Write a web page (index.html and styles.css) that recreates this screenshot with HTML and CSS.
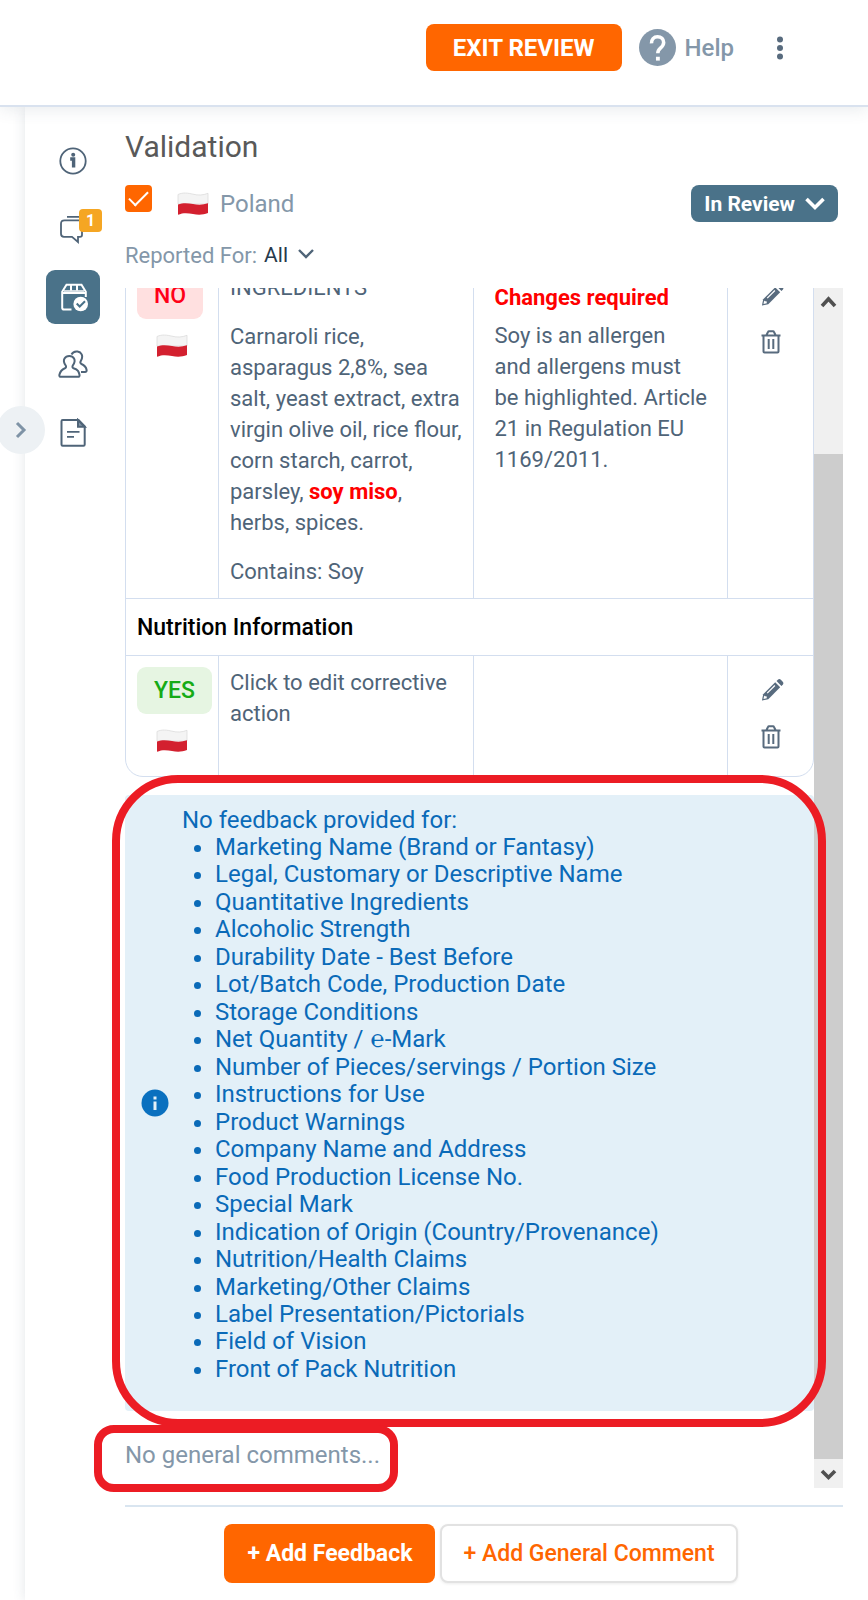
FILE: index.html
```html
<!DOCTYPE html>
<html lang="en">
<head>
<meta charset="utf-8">
<meta name="viewport" content="width=device-width, initial-scale=1">
<title>Validation</title>
<link rel="stylesheet" href="styles.css">
</head>
<body>
<svg class="defs" aria-hidden="true">
  <symbol id="flag-pl" viewBox="0 0 32 24">
    <path d="M1 2.500C6 .2 11 1 16 2.200S26 3.400 31 1.300V12H1Z" fill="#f4f4f4" stroke="#dcdcdc" stroke-width=".8"/>
    <path d="M1 12.500C6 10.500 11 11 16 12S26 13 31 11.300V21C26 23 21 23 16 22S6 20.500 1 22.800Z" fill="#d3202f"/>
  </symbol>
  <symbol id="pencil" viewBox="0 0 24 24">
    <path d="M14.800 4 20 9.200 7.600 21.700 1 23l1.300-6.600Z" fill="#586b7e"/>
    <path d="m16.200 2.700 1.400-1.400c.9-.9 2.200-.9 3.100 0l2 2c.9.9.9 2.200 0 3.100l-1.400 1.400Z" fill="#586b7e"/>
    <path d="M14.500 7.300 6.500 15.300" stroke="#fff" stroke-width="1.300" fill="none"/>
    <path d="M3.300 17.800 2.600 21.300l3.500-.8-.3-1.900-1.800-.2Z" fill="#fff"/>
  </symbol>
  <symbol id="trash" viewBox="0 0 20 24">
    <path d="M.5 5.500h19M2.500 5.500V21.500q0 1 1 1h13q1 0 1-1V5.500M5.500 5 7 2q.3-.7 1-.7h4q.7 0 1 .7l1.500 3M7.700 9v10M12.300 9v10" fill="none" stroke="#586b7e" stroke-width="2"/>
  </symbol>
</svg>

<div class="app">
  <header class="topbar">
    <button class="exit" type="button">EXIT REVIEW</button>
    <a class="help" href="#">
      <svg class="help-icon" viewBox="0 0 24 24" aria-hidden="true"><circle cx="12" cy="12" r="12" fill="#8497a9"/><path d="M8.100 9.300C8 6.800 9.600 5 12 5s4 1.500 4 3.800c0 1.700-.9 2.600-2.100 3.600-1.200 1-1.700 1.500-1.700 3.300" fill="none" stroke="#fff" stroke-width="2.300"/><path d="M11 18h2.500v2.500H11z" fill="#fff"/></svg>
      Help
    </a>
    <button class="more" type="button" aria-label="More options">
      <svg viewBox="0 0 8 26" aria-hidden="true" fill="#586b7e"><circle cx="4" cy="4.500" r="3"/><circle cx="4" cy="13" r="3"/><circle cx="4" cy="21.500" r="3"/></svg>
    </button>
  </header>

  <div class="body">
    <div class="gutter"></div>
    <button class="collapse" type="button" aria-label="Collapse panel">
      <svg viewBox="0 0 12 18" aria-hidden="true"><path d="m2 2 7 7-7 7" fill="none" stroke="#7f93a6" stroke-width="3"/></svg>
    </button>
    <div class="panel">
      <nav class="rail" aria-label="Sections">
        <button type="button" class="rail-item" aria-label="Information">
          <svg viewBox="0 0 30 30" fill="none" stroke="#4f6478" stroke-width="1.800"><circle cx="15" cy="15" r="12.700"/><circle cx="15.200" cy="8.700" r="2" fill="#4f6478" stroke="none"/><path d="M12.200 13h3.400v8.500" stroke-width="3.400"/></svg>
        </button>
        <button type="button" class="rail-item" aria-label="Comments">
          <svg viewBox="0 0 30 30" fill="none" stroke="#4f6478" stroke-width="1.800"><path d="M9 2.800h14M6.500 6.300H22q2 0 2 2V21q0 1.800-2 1.800h-2V28l-6-5.200H6q-3 0-3-3V9.800q0-3.500 3.500-3.500Z"/></svg>
          <span class="badge">1</span>
        </button>
        <button type="button" class="rail-item active" aria-label="Validation" aria-current="page">
          <svg viewBox="0 0 30 30" fill="none" stroke="#fff" stroke-width="2"><path d="M13.500 27.500H6q-1.800 0-1.800-1.800V9.800L8.500 2.800h15l4.300 7V15M4.200 11h23.600M13 3v5.500M19 3v5.500"/><path d="M6 9h20" stroke-width="1.500"/><circle cx="22.700" cy="22" r="7.300" fill="#fff" stroke="none"/><path d="m18.700 21.500 3 3 5.300-5.300" stroke="#4a7289"/></svg>
        </button>
        <button type="button" class="rail-item" aria-label="Users">
          <svg viewBox="0 0 30 30" fill="none" stroke="#4f6478" stroke-width="2"><path d="M7.700 15.500C3.500 9.500 7.500 6 11.300 6s7.700 3.500 3.500 9.500q-1 2 .8 2.700c4.500 1.500 5.200 3.500 5.900 6.600.3 1.300-.3 2-1.600 2H3c-1.300 0-1.900-.7-1.600-2 .7-3.100 1.800-5.100 5.500-6.600q1.800-.7.800-2.700Z"/><path d="M13.500 4.500C15 1.500 17.500 1.200 19.500 1.500c3.500.5 6.500 4 3.300 9.500q-1.200 2 .7 3c3.500 1.500 4.700 3.500 5.100 6 .2 1.300-.3 2-1.600 2h-4"/></svg>
        </button>
        <button type="button" class="rail-item" aria-label="Document">
          <svg viewBox="0 0 30 30" fill="none" stroke="#4f6478" stroke-width="2"><path d="M4.700 2h15.800l6.200 6.500V26.500q0 1.200-1.200 1.200H4.700q-1.200 0-1.200-1.200V3.200Q3.500 2 4.700 2Z"/><path d="M20 2v6.800h6.700Z" fill="#8497a9"/><path d="M9 13.800h12.500M9 18.800h7" stroke-width="1.800"/></svg>
        </button>
      </nav>

      <main class="content">
        <h1>Validation</h1>
        <div class="country-row">
          <label class="country">
            <input type="checkbox" checked>
            <svg class="flag" aria-hidden="true"><use href="#flag-pl"/></svg>
            <span>Poland</span>
          </label>
          <button class="status" type="button">In Review
            <svg viewBox="0 0 20 14" aria-hidden="true"><path d="m1.500 2 8.500 8.500L18.500 2" fill="none" stroke="#fff" stroke-width="3.600"/></svg>
          </button>
        </div>
        <div class="filter">
          <span>Reported For:</span>
          <button type="button">All
            <svg viewBox="0 0 18 12" aria-hidden="true"><path d="m2 2 7 7 7-7" fill="none" stroke="#4f6478" stroke-width="2.400"/></svg>
          </button>
        </div>

        <div class="viewport">
          <div class="feed">
            <table class="report">
              <colgroup><col class="col-verdict"><col><col><col class="col-actions"></colgroup>
              <tbody>
              <tr>
                <td class="verdict"><span class="tag no">NO</span><svg class="flag" aria-hidden="true"><use href="#flag-pl"/></svg></td>
                <td>
                  <p>INGREDIENTS</p>
                  <p>Carnaroli rice, asparagus 2,8%, sea salt, yeast extract, extra virgin olive oil, rice flour, corn starch, carrot, parsley, <strong>soy miso</strong>, herbs, spices.</p>
                  <p>Contains: Soy</p>
                </td>
                <td class="remark">
                  <p><strong>Changes required</strong></p>
                  <p>Soy is an allergen<br>and allergens must<br>be highlighted. Article 21 in Regulation EU 1169/2011.</p>
                </td>
                <td class="actions">
                  <button type="button" aria-label="Edit"><svg><use href="#pencil"/></svg></button>
                  <button type="button" aria-label="Delete"><svg><use href="#trash"/></svg></button>
                </td>
              </tr>
              <tr><th colspan="4" scope="rowgroup">Nutrition Information</th></tr>
              <tr>
                <td class="verdict"><span class="tag yes">YES</span><svg class="flag" aria-hidden="true"><use href="#flag-pl"/></svg></td>
                <td><p>Click to edit corrective action</p></td>
                <td></td>
                <td class="actions">
                  <button type="button" aria-label="Edit"><svg><use href="#pencil"/></svg></button>
                  <button type="button" aria-label="Delete"><svg><use href="#trash"/></svg></button>
                </td>
              </tr>
              </tbody>
            </table>

            <section class="notice">
              <svg class="notice-icon" viewBox="0 0 28 28" aria-hidden="true"><circle cx="14" cy="14" r="13.500" fill="#0a70bf"/><path d="M12.500 7.500h3v3h-3zM12.500 12.500h3v8.500h-3z" fill="#e3f0f8"/></svg>
              <div class="notice-text">
                <p>No feedback provided for:</p>
                <ul>
                  <li>Marketing Name (Brand or Fantasy)</li>
                  <li>Legal, Customary or Descriptive Name</li>
                  <li>Quantitative Ingredients</li>
                  <li>Alcoholic Strength</li>
                  <li>Durability Date - Best Before</li>
                  <li>Lot/Batch Code, Production Date</li>
                  <li>Storage Conditions</li>
                  <li>Net Quantity / ℮-Mark</li>
                  <li>Number of Pieces/servings / Portion Size</li>
                  <li>Instructions for Use</li>
                  <li>Product Warnings</li>
                  <li>Company Name and Address</li>
                  <li>Food Production License No.</li>
                  <li>Special Mark</li>
                  <li>Indication of Origin (Country/Provenance)</li>
                  <li>Nutrition/Health Claims</li>
                  <li>Marketing/Other Claims</li>
                  <li>Label Presentation/Pictorials</li>
                  <li>Field of Vision</li>
                  <li>Front of Pack Nutrition</li>
                </ul>
              </div>
            </section>
            <p class="comments">No general comments...</p>
          </div>
          <div class="scrollbar" aria-hidden="true">
            <svg viewBox="0 0 29 29"><path d="m8 18 6.500-7 6.500 7" fill="none" stroke="#505050" stroke-width="3.600"/></svg>
            <div class="track"><div class="thumb"></div></div>
            <svg viewBox="0 0 29 29"><path d="m8 12 6.500 6.500 6.500-6.500" fill="none" stroke="#505050" stroke-width="3.600"/></svg>
          </div>
          <div class="mark mark-notice"></div>
          <div class="mark mark-comments"></div>
        </div>

        <footer class="footer">
          <button class="primary" type="button">+ Add Feedback</button>
          <button class="secondary" type="button">+ Add General Comment</button>
        </footer>
      </main>
    </div>
  </div>
</div>
</body>
</html>
```

FILE: styles.css
```css
* { box-sizing: border-box; }
body { margin: 0; font-family: Roboto, "Liberation Sans", sans-serif; font-size: 22px; color: #4f6478; background: #fff; }
p, h1, ul { margin: 0; }
button { font: inherit; color: inherit; border: 0; padding: 0; background: none; cursor: pointer; }
svg { display: block; flex: none; }
.defs { position: absolute; width: 0; height: 0; }

.app { height: 100vh; display: flex; flex-direction: column; overflow: hidden; }

.topbar { position: relative; z-index: 2; flex: none; display: flex; align-items: center; justify-content: flex-end; height: 107px; padding: 0 75px 10px 0; background: #fff; border-bottom: 2px solid #d9e2ef; box-shadow: 0 2px 16px rgba(60, 80, 100, .12); }
.exit { height: 47px; padding: 0 27px; border-radius: 8px; background: #ff6600; color: #fff; font-size: 24px; font-weight: 700; }
.help { display: flex; align-items: center; gap: 9px; margin-left: 17px; color: #8497a9; font-size: 24px; text-decoration: none; font-weight: 500; }
.help-icon { width: 37px; height: 37px; }
.more { margin-left: 33px; width: 26px; height: 40px; display: flex; align-items: center; justify-content: center; }
.more svg { width: 8px; height: 26px; }

.body { position: relative; flex: 1; min-height: 0; display: flex; }
.gutter { width: 25px; flex: none; }
.collapse { position: absolute; z-index: 1; left: -3px; top: 299px; width: 48px; height: 48px; border-radius: 50%; background: #edf1f4; display: flex; align-items: center; justify-content: center; }
.collapse svg { width: 12px; height: 18px; }
.panel { flex: 1; min-width: 0; display: flex; background: #fff; box-shadow: 0 0 12px rgba(60, 80, 100, .14); }

.rail { flex: none; width: 75px; padding-top: 27px; display: flex; flex-direction: column; align-items: flex-end; gap: 14px; }
.rail-item { position: relative; width: 54px; height: 54px; border-radius: 9px; display: flex; align-items: center; justify-content: center; }
.rail-item svg { width: 30px; height: 30px; }
.rail-item.active { background: #4a7289; }
.badge { position: absolute; right: -2px; top: 7px; width: 23px; height: 23px; border-radius: 4px; background: #f5a623; color: #fff; font-size: 16px; line-height: 23px; font-weight: 700; text-align: center; }

.content { flex: 1; min-width: 0; display: flex; flex-direction: column; padding: 20px 25px 17px; }
h1 { font-size: 30px; line-height: 40px; font-weight: 400; color: #595959; }
.country-row { display: flex; justify-content: space-between; align-items: center; margin-top: 18px; padding-right: 5px; }
.country { display: flex; align-items: center; font-size: 24px; line-height: 36px; color: #8497a9; }
.country input { appearance: none; margin: 0 25px 10px 0; width: 27px; height: 27px; border-radius: 4px; background: #ff6600; display: grid; place-items: center; }
.country input:checked::before { content: ""; width: 17px; height: 8px; border-left: 2px solid #fff; border-bottom: 2px solid #fff; transform: rotate(-45deg) translate(2px, -2px); }
.flag { width: 32px; height: 24px; }
.country span { margin-left: 11px; }
.status { height: 37px; padding: 0 13px; border-radius: 8px; background: #4a7289; color: #fff; font-size: 21px; font-weight: 700; display: flex; align-items: center; gap: 10px; }
.status svg { width: 20px; height: 14px; }
.filter { display: flex; gap: 7px; margin-top: 18px; line-height: 31px; color: #8497a9; font-size: 22px; }
.filter button { display: flex; align-items: center; gap: 9px; color: #26394b; font-size: 21px; }
.filter svg { width: 18px; height: 12px; margin-bottom: 4px; }

.viewport { position: relative; flex: 1; min-height: 0; margin-top: 17px; display: flex; }
.feed { flex: 1; min-width: 0; overflow: hidden; display: flex; flex-direction: column; justify-content: flex-end; padding-bottom: 19px; }
.feed > * { flex: none; }

.report { width: 100%; table-layout: fixed; border-spacing: 0; border: 1px solid #d3deef; border-radius: 18px; line-height: 31px; }
.col-verdict { width: 92px; }
.col-actions { width: 86px; }
.report td { vertical-align: top; padding: 11px 8px 11px 11px; border-left: 1px solid #d3deef; }
.report td:first-child { border-left: 0; }
.report th { height: 58px; padding: 0 11px; border-top: 1px solid #d3deef; border-bottom: 1px solid #d3deef; text-align: left; font-size: 23px; font-weight: 500; color: #000; }
.report td p + p { margin-top: 18px; }
.report td.remark { padding: 21px 10px 11px 21px; }
.report td.remark p + p { margin-top: 7px; }
.report strong { color: #ff0000; }
.report td.verdict { padding-right: 4px; padding-bottom: 23px; }
.tag { display: inline-block; height: 47px; padding: 0 17px; border-radius: 9px; line-height: 47px; font-size: 23px; font-weight: 500; vertical-align: top; }
.tag.no { background: #ffe0e0; color: #ff0018; }
.tag.yes { background: #e6f5e2; color: #16ab16; }
.verdict .flag { margin: 15px 0 0 19px; }
.report td.actions { padding: 22px 0 0 33px; }
.actions button { display: block; }
.actions button + button { margin-top: 23px; }
.actions svg { width: 23px; height: 24px; }
.actions button + button svg { width: 20px; }

.notice { display: flex; align-items: center; gap: 13px; margin-top: 18px; padding: 12px 16px 28px; background: #e3f0f8; border-radius: 4px; color: #0a6ab8; font-size: 24px; line-height: 27px; }
.notice-icon { width: 28px; height: 28px; margin-top: 16px; }
.notice ul { display: grid; align-content: space-between; min-height: 549px; padding-left: 33px; }
.comments { margin-top: 31px; font-size: 24px; line-height: 27px; color: #8497a9; }

.scrollbar { flex: none; width: 29px; display: flex; flex-direction: column; background: #f0f0f0; }
.scrollbar svg { width: 29px; height: 29px; }
.track { flex: 1; display: flex; flex-direction: column; justify-content: flex-end; }
.thumb { height: 88%; background: #cdcdcd; }

.mark { position: absolute; border: 8px solid #ec1c24; pointer-events: none; }
.mark-notice { left: -13px; right: 17px; bottom: 61px; height: 652px; border-radius: 66px; }
.mark-comments { left: -31px; bottom: -4px; width: 304px; height: 67px; border-radius: 20px; }

.footer { flex: none; display: flex; justify-content: center; gap: 5px; margin-top: 17px; padding: 17px 6px 0 0; border-top: 2px solid #d9e5f0; }
.footer button { height: 59px; padding: 0 23px; border-radius: 8px; font-size: 23px; font-weight: 500; white-space: nowrap; }
.footer .primary { background: #ff6600; color: #fff; font-weight: 700; }
.footer .secondary { padding: 0 21px; background: #fff; color: #ff6600; border: 2px solid #e2e2e2; box-shadow: 0 1px 3px rgba(0, 0, 0, .08); }
```
